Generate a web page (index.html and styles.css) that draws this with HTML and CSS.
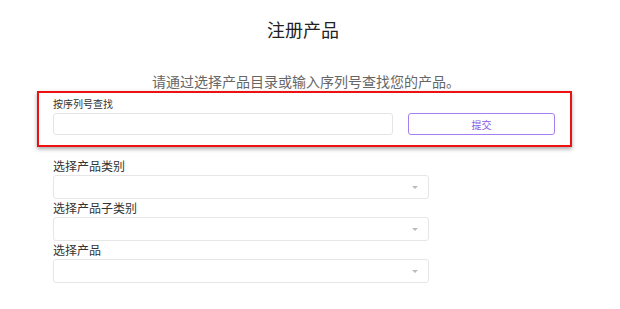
FILE: index.html
```html
<!DOCTYPE html>
<html lang="zh-CN">
<head>
  <meta charset="UTF-8" />
  <meta name="viewport" content="width=device-width, initial-scale=1.0"/>
  <title>注册产品</title>
  <link rel="stylesheet" href="styles.css">
</head>
<body>
  <div class="page">
    <h1 class="page-title">注册产品</h1>
    <p class="page-intro">请通过选择产品目录或输入序列号查找您的产品。</p>

    <div class="serial-box">
      <label class="serial-label" for="serial">按序列号查找</label>
      <div class="serial-row">
        <input class="serial-input" id="serial" type="text" />
        <button class="submit-btn" type="button">提交</button>
      </div>
    </div>

    <div class="catalog">
      <div class="field">
        <label class="field-label">选择产品类别</label>
        <div class="select-box"><span class="caret"></span></div>
      </div>
      <div class="field">
        <label class="field-label">选择产品子类别</label>
        <div class="select-box"><span class="caret"></span></div>
      </div>
      <div class="field">
        <label class="field-label">选择产品</label>
        <div class="select-box"><span class="caret"></span></div>
      </div>
    </div>
  </div>
</body>
</html>
```

FILE: styles.css
```css
body {
  margin: 0;
  background: #ffffff;
  font-family: "Noto Sans CJK SC", "Noto Sans", sans-serif;
  color: #333333;
}

.page {
  width: 620px;
  padding-top: 17px;
}

.page-title {
  margin: 0;
  font-size: 18px;
  line-height: 24px;
  font-weight: 400;
  color: #222222;
  text-align: center;
  padding-right: 14px;
}

.page-intro {
  margin: 30px 0 0;
  font-size: 14px;
  line-height: 20px;
  color: #666666;
  text-align: center;
  padding-right: 8px;
}

/* serial number search, highlighted */
.serial-box {
  margin-left: 37px;
  width: 535px;
  box-sizing: border-box;
  border: 2px solid #ee1111;
  padding: 4px 15px 10px 14px;
  box-shadow: 0 2px 4px rgba(0, 0, 0, 0.35);
  display: flex;
  flex-direction: column;
  gap: 2px;
}

.serial-label {
  font-size: 10px;
  line-height: 14px;
  color: #333333;
}

.serial-row {
  display: flex;
  gap: 15px;
}

.serial-input {
  width: 340px;
  height: 22px;
  box-sizing: border-box;
  border: 1px solid #e4e4e4;
  border-radius: 3px;
  padding: 0;
  margin: 0;
}

.submit-btn {
  flex: 1;
  height: 22px;
  box-sizing: border-box;
  border: 1px solid #a47ff2;
  border-radius: 3px;
  background: #ffffff;
  color: #8a5ae8;
  font-family: inherit;
  font-size: 10px;
  padding: 0;
  margin: 0;
}

/* catalog selects */
.catalog {
  margin: 10px 0 0 53px;
  width: 376px;
}

.field {
  display: flex;
  flex-direction: column;
}

.field-label {
  font-size: 12px;
  line-height: 18px;
  color: #333333;
}

.select-box {
  height: 24px;
  box-sizing: border-box;
  border: 1px solid #e6e6e6;
  border-radius: 3px;
  display: flex;
  align-items: center;
  justify-content: flex-end;
  padding-right: 10px;
}

.caret {
  width: 0;
  height: 0;
  border-left: 3px solid transparent;
  border-right: 3px solid transparent;
  border-top: 3px solid #bbbbbb;
}
```
